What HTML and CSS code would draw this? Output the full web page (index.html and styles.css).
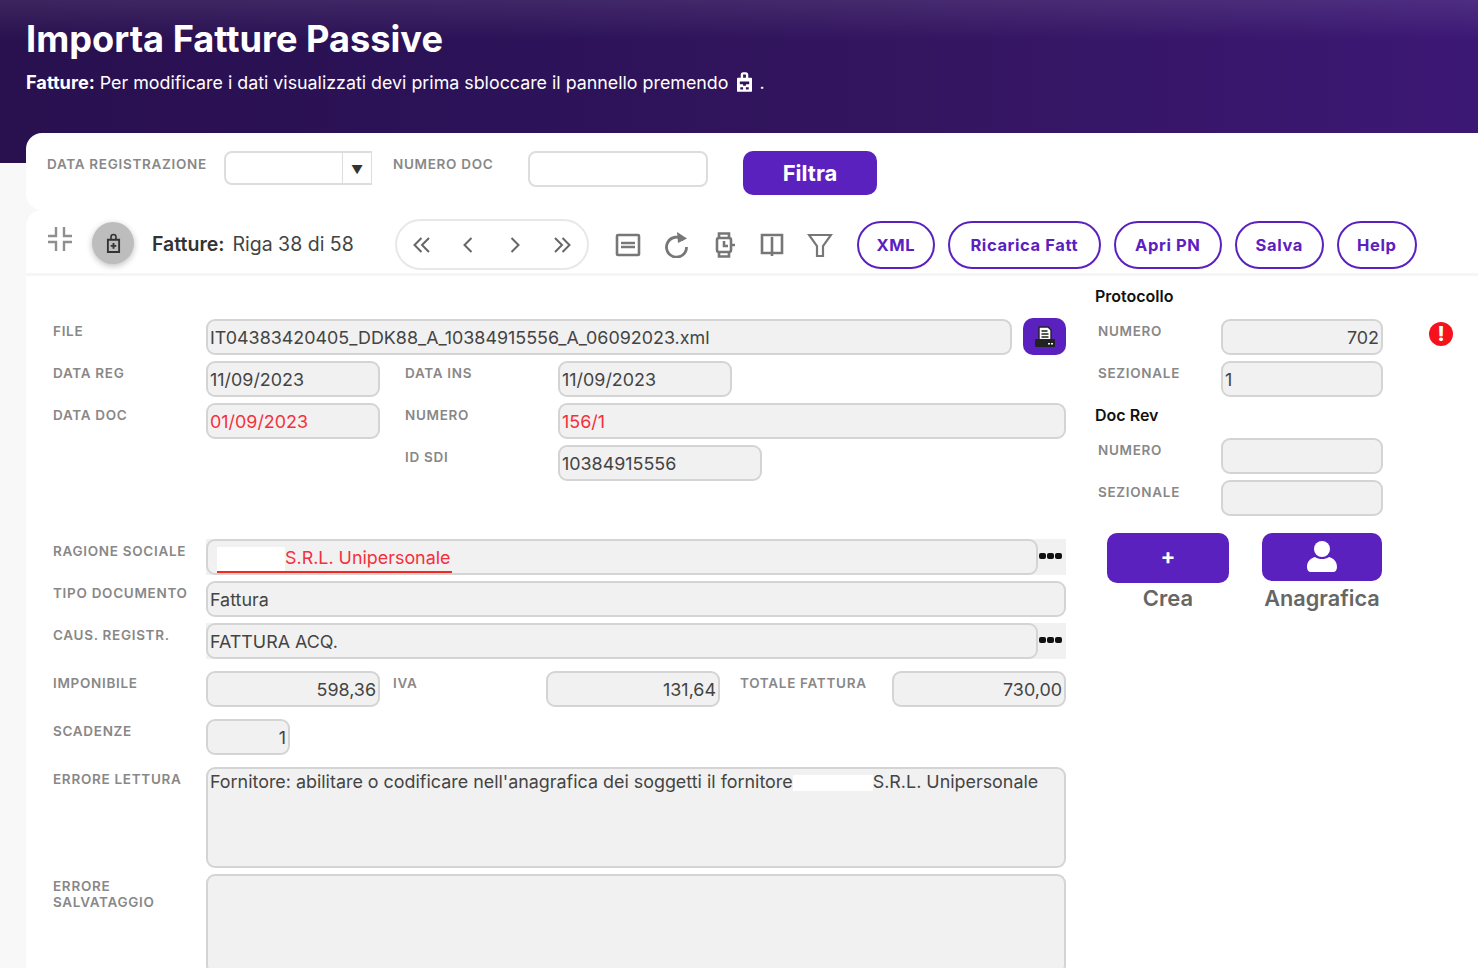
FILE: index.html
```html
<!DOCTYPE html>
<html lang="it">
<head>
  <meta charset="UTF-8">
  <title>Importa Fatture Passive</title>
  <link rel="stylesheet" href="styles.css">
</head>
<body>
  <header class="hero">
    <h1 class="hero-title">Importa Fatture Passive</h1>
    <p class="hero-text"><b>Fatture:</b> Per modificare i dati visualizzati devi prima sbloccare il pannello premendo
      <svg class="hero-lock" viewBox="0 0 16 21"><path fill="#fff" fill-rule="evenodd" d="M4 6V2.500C4 1 5 0 6.500 0h3C11 0 12 1 12 2.500V6h3a1 1 0 0 1 1 1v13a1 1 0 0 1-1 1H1a1 1 0 0 1-1-1V7a1 1 0 0 1 1-1zm2.500 0h3V2.500h-3zM3 10v3h3.500v1.500h3V13H13v-3zM3.500 16v2.500h3V16zm6 0v2.500h3V16z"/></svg> .</p>
  </header>

  <main class="card">
    <section class="filter">
      <span class="label filter-label1">DATA REGISTRAZIONE</span>
      <div class="select"><span class="select-arrow">▼</span></div>
      <span class="label filter-label2">NUMERO DOC</span>
      <div class="filter-input"></div>
      <button class="filter-btn">Filtra</button>
    </section>

    <section class="toolbar">
      <svg class="collapse" viewBox="0 0 26 26" fill="none" stroke="#8f8f8f" stroke-width="2.400"><path d="M9 1v9H1M17 1v9h8M9 25v-9H1M17 25v-9h8"/></svg>
      <span class="lock-btn"><svg viewBox="0 0 16 22" width="15" height="21"><path fill="#333" fill-rule="evenodd" d="M4.500 6V4a3.500 3.500 0 0 1 7 0v2H15v15H1V6zm1.700 0h3.600V4a1.800 1.800 0 0 0-3.600 0zM3 8v11h10V8zm4 2.500v2H5v2h2v2h2v-2h2v-2H9v-2z"/></svg></span>
      <span class="record"><b>Fatture:</b>Riga 38 di 58</span>
      <nav class="pager">
        <svg viewBox="0 0 20 20" fill="none" stroke="#666" stroke-width="2"><path d="M9.500 3 2.500 10l7 7M17 3l-7 7 7 7"/></svg>
        <svg viewBox="0 0 20 20" fill="none" stroke="#666" stroke-width="2"><path d="M13.500 3l-7 7 7 7"/></svg>
        <svg viewBox="0 0 20 20" fill="none" stroke="#666" stroke-width="2"><path d="M6.500 3l7 7-7 7"/></svg>
        <svg viewBox="0 0 20 20" fill="none" stroke="#666" stroke-width="2"><path d="M3 3l7 7-7 7M10.500 3l7 7-7 7"/></svg>
      </nav>
      <div class="tools">
        <svg viewBox="0 0 26 26" fill="none" stroke="#777" stroke-width="2.600"><rect x="2" y="3" width="22" height="20" rx="1"/><path d="M6 11h14M6 15h14"/></svg>
        <svg viewBox="0 0 26 26" fill="none" stroke="#777" stroke-width="2.800"><path d="M20.500 8A10 10 0 1 0 23.500 15"/><path fill="#777" stroke="none" d="M14 0l10 6.500-9 4.500z"/></svg>
        <svg viewBox="0 0 26 26" fill="none" stroke="#777" stroke-width="2.600"><rect x="6" y="6" width="14" height="14" rx="2"/><path d="M8 6V1.500h10V6M8 20v4.500h10V20M21 13h3M13 9v5h4"/></svg>
        <svg viewBox="0 0 26 26" fill="none" stroke="#777" stroke-width="2.600"><path d="M13 5v19M3 3h20v18H3z"/></svg>
        <svg viewBox="0 0 26 26" fill="none" stroke="#777" stroke-width="2.200"><path d="M2 3h22l-8 11v10h-6V14z"/></svg>
      </div>
      <div class="actions">
        <button class="pill pill-xml">XML</button>
        <button class="pill pill-ricarica">Ricarica Fatt</button>
        <button class="pill pill-apri">Apri PN</button>
        <button class="pill pill-salva">Salva</button>
        <button class="pill pill-help">Help</button>
      </div>
    </section>

    <section class="form">
      <div class="form-left">
        <div class="row">
          <span class="label">FILE</span>
          <div class="inp grow">IT04383420405_DDK88_A_10384915556_A_06092023.xml</div>
          <button class="print-btn"><svg viewBox="0 0 24 24" width="24" height="24"><path fill="#fff" stroke="#222" stroke-width="1.400" d="M6 2h9l3 3v10H6z"/><path stroke="#222" stroke-width="1.400" d="M8.500 6h6M8.500 9h7M8.500 12h7"/><path fill="#222" d="M3 14h18a1 1 0 0 1 1 1v6a1 1 0 0 1-1 1H3a1 1 0 0 1-1-1v-6a1 1 0 0 1 1-1z"/><path fill="#fff" d="M15 18h2v1.500h-2zM18 18h2v1.500h-2z"/></svg></button>
        </div>
        <div class="row">
          <span class="label">DATA REG</span>
          <div class="inp w-date">11/09/2023</div>
          <span class="label label-2">DATA INS</span>
          <div class="inp w-date">11/09/2023</div>
        </div>
        <div class="row">
          <span class="label">DATA DOC</span>
          <div class="inp w-date red">01/09/2023</div>
          <span class="label label-2">NUMERO</span>
          <div class="inp grow red">156/1</div>
        </div>
        <div class="row row-gap">
          <span class="spacer"></span>
          <span class="label label-2">ID SDI</span>
          <div class="inp w-sdi">10384915556</div>
        </div>
        <div class="row">
          <span class="label">RAGIONE SOCIALE</span>
          <div class="lookup grow">
            <div class="inp grow red ragione"><span class="redact redact-a"></span>S.R.L. Unipersonale<span class="underline"></span></div>
            <span class="dots"><i></i><i></i><i></i></span>
          </div>
        </div>
        <div class="row">
          <span class="label">TIPO DOCUMENTO</span>
          <div class="inp grow">Fattura</div>
        </div>
        <div class="row row-totals">
          <span class="label">CAUS. REGISTR.</span>
          <div class="lookup grow">
            <div class="inp grow">FATTURA ACQ.</div>
            <span class="dots"><i></i><i></i><i></i></span>
          </div>
        </div>
        <div class="row row-totals">
          <span class="label">IMPONIBILE</span>
          <div class="inp w-date right">598,36</div>
          <span class="label label-iva">IVA</span>
          <div class="inp w-date right">131,64</div>
          <span class="label label-tot">TOTALE FATTURA</span>
          <div class="inp grow right">730,00</div>
        </div>
        <div class="row row-totals">
          <span class="label">SCADENZE</span>
          <div class="inp w-scad right">1</div>
        </div>
        <div class="row row-text">
          <span class="label">ERRORE LETTURA</span>
          <div class="inp grow area">Fornitore: abilitare o codificare nell'anagrafica dei soggetti il fornitore <span class="redact redact-b"></span> S.R.L. Unipersonale</div>
        </div>
        <div class="row">
          <span class="label">ERRORE SALVATAGGIO</span>
          <div class="inp grow area area-big"></div>
        </div>
      </div>

      <aside class="form-right">
        <h3 class="side-title">Protocollo</h3>
        <div class="row side-row">
          <span class="label side-label">NUMERO</span>
          <div class="inp w-side right">702</div>
          <span class="alert">!</span>
        </div>
        <div class="row side-row">
          <span class="label side-label">SEZIONALE</span>
          <div class="inp w-side">1</div>
        </div>
        <h3 class="side-title side-title-2">Doc Rev</h3>
        <div class="row side-row">
          <span class="label side-label">NUMERO</span>
          <div class="inp w-side"></div>
        </div>
        <div class="row side-row">
          <span class="label side-label">SEZIONALE</span>
          <div class="inp w-side"></div>
        </div>
        <div class="side-actions">
          <div class="side-action">
            <button class="big-btn crea">+</button>
            <span>Crea</span>
          </div>
          <div class="side-action anag">
            <button class="big-btn"><svg viewBox="0 0 30 32" width="30" height="32"><circle cx="15" cy="8" r="8" fill="#fff"/><path fill="#fff" d="M0 26c0-6 4-9 8-10 2 1.500 4.500 2 7 2s5-.5 7-2c4 1 8 4 8 10 0 3-1.500 5-4 5H4c-2.500 0-4-2-4-5z"/></svg></button>
            <span>Anagrafica</span>
          </div>
        </div>
      </aside>
    </section>
  </main>
</body>
</html>
```

FILE: styles.css
```css
* {
  box-sizing: border-box;
}

html,
body {
  height: 968px;
  overflow: hidden;
}

body {
  margin: 0;
  background: #f8f8f8;
  font-family: Inter, "Liberation Sans", sans-serif;
  color: #333;
}

button {
  font-family: inherit;
  cursor: pointer;
}

/* header */
.hero {
  height: 163px;
  padding: 19px 26px 0;
  color: #fff;
  background: linear-gradient(180deg, rgba(255, 255, 255, 0.09) 0%, rgba(255, 255, 255, 0) 40px),
    linear-gradient(90deg, #29104f 0%, #2c1258 35%, #33155f 60%, #3c1875 100%);
}

.hero-title {
  margin: 0;
  font-size: 36.200px;
  line-height: 40px;
  font-weight: 700;
}

.hero-text {
  margin: 12px 0 0;
  font-size: 17.830px;
  line-height: 22px;
}

.hero-text b {
  font-size: 18.200px;
}

.hero-lock {
  width: 15px;
  height: 20px;
  margin: 0 2px 0 4px;
  vertical-align: -3px;
}

/* card */
.card {
  margin: -30px 0 0 26px;
  position: relative;
}

.label {
  flex: none;
  font-size: 13.500px;
  line-height: 16px;
  font-weight: 600;
  letter-spacing: 0.7px;
  color: #888;
}

.filter {
  display: flex;
  align-items: flex-start;
  height: 77px;
  padding: 18px 0 0 21px;
  background: #fff;
  border-radius: 16px 0 0 16px;
}

.filter-label1 {
  width: 177px;
  margin-top: 5px;
}

.select {
  position: relative;
  width: 148px;
  height: 34px;
  border: 2px solid #ddd;
  border-right-width: 1px;
  border-radius: 8px 0 0 8px;
}

.select-arrow {
  position: absolute;
  top: 0;
  right: 0;
  width: 29px;
  height: 31px;
  border-left: 1px solid #ddd;
  font-size: 12px;
  line-height: 33px;
  text-align: center;
  color: #333;
}

.filter-label2 {
  width: 135px;
  margin: 5px 0 0 21px;
}

.filter-input {
  width: 180px;
  height: 36px;
  border: 2px solid #ddd;
  border-radius: 8px;
}

.filter-btn {
  width: 134px;
  height: 44px;
  margin-left: 35px;
  border: 0;
  border-radius: 10px;
  background: #5b21bf;
  color: #fff;
  font-size: 22px;
  font-weight: 700;
}

/* toolbar */
.toolbar {
  display: flex;
  align-items: center;
  height: 66px;
  padding: 7px 0 0 21px;
  background: #fff;
  border-radius: 16px 0 0 0;
  border-bottom: 3px solid #f6f6f6;
}

.collapse {
  width: 26px;
  height: 26px;
  margin-top: -13px;
}

.lock-btn {
  display: flex;
  align-items: center;
  justify-content: center;
  width: 42px;
  height: 42px;
  margin: -4px 0 0 19px;
  border-radius: 50%;
  background: #bdbdbd;
  box-shadow: 0 2px 6px rgba(0, 0, 0, 0.25);
}

.record {
  margin: -2px 0 0 18px;
  font-size: 19.500px;
  color: #444;
}

.record b {
  margin-right: 8px;
  font-weight: 600;
  color: #333;
}

.pager {
  display: flex;
  align-items: center;
  justify-content: space-between;
  width: 194px;
  height: 51px;
  margin: -1px 0 0 41px;
  padding: 0 15px;
  border: 2px solid #e8e8e8;
  border-radius: 26px;
}

.pager svg {
  width: 20px;
  height: 20px;
}

.tools {
  display: flex;
  gap: 22px;
  margin-left: 26px;
}

.tools svg {
  width: 26px;
  height: 26px;
}

.actions {
  display: flex;
  gap: 13px;
  margin-left: 24px;
}

.pill {
  height: 48px;
  padding: 0;
  border: 2px solid #5b21bf;
  border-radius: 24px;
  background: #fff;
  color: #5b21bf;
  font-size: 16.500px;
  font-weight: 700;
  letter-spacing: 0.6px;
}

.pill-xml {
  width: 78px;
}

.pill-ricarica {
  width: 153px;
}

.pill-apri {
  width: 108px;
}

.pill-salva {
  width: 89px;
}

.pill-help {
  width: 80px;
}

/* form */
.form {
  display: flex;
  gap: 29px;
  height: 695px;
  overflow: hidden;
  padding: 11px 0 0 27px;
  background: #fff;
}

.form-left {
  width: 1013px;
  margin-top: 32px;
}

.row {
  display: flex;
  align-items: flex-start;
  margin-bottom: 6px;
}

.row > .label:first-child,
.spacer {
  flex: none;
  width: 153px;
  margin-top: 4px;
}

.row-gap {
  margin-bottom: 58px;
}

.row-totals {
  margin-bottom: 12px;
}

.inp {
  flex: none;
  height: 36px;
  padding: 0 2px;
  border: 2px solid #d4d4d4;
  border-radius: 9px;
  background: #f1f1f1;
  font-size: 17.900px;
  line-height: 33px;
  color: #444;
  white-space: nowrap;
}

.grow {
  flex: 1;
  min-width: 0;
}

.right {
  text-align: right;
}

.red {
  color: #f4303c;
}

.w-date {
  width: 174px;
}

.w-sdi {
  width: 204px;
}

.w-scad {
  width: 84px;
}

.w-side {
  width: 162px;
}

.label-2 {
  width: 153px;
  margin: 4px 0 0 25px;
}

.spacer + .label-2 {
  margin-left: 199px;
}

.label-iva {
  width: 153px;
  margin: 4px 0 0 13px;
}

.label-tot {
  width: 152px;
  margin: 4px 0 0 20px;
}

.print-btn {
  flex: none;
  display: flex;
  align-items: center;
  justify-content: center;
  width: 43px;
  height: 37px;
  margin: -1px 0 -1px 11px;
  padding: 0;
  border: 0;
  border-radius: 10px;
  background: #5b21bf;
}

.lookup {
  display: flex;
  background: #f1f1f1;
}

.lookup .inp {
  position: relative;
}

.dots {
  flex: none;
  display: flex;
  align-items: center;
  gap: 1px;
  width: 28px;
  height: 36px;
  padding: 0 0 2px 1px;
}

.dots i {
  width: 7px;
  height: 6px;
  border-radius: 2px;
  background: #111;
}

.ragione {
  position: relative;
  padding-left: 9px;
}

.redact {
  display: inline-block;
  background: #fff;
}

.redact-a {
  width: 68px;
  height: 24px;
  vertical-align: middle;
}

.redact-b {
  width: 80px;
  height: 16px;
  margin: 0 -5px;
  vertical-align: -3px;
}

.underline {
  position: absolute;
  left: 9px;
  bottom: 0;
  width: 235px;
  height: 2px;
  background: #f02a20;
}

.area {
  height: 101px;
  white-space: normal;
  line-height: 26px;
}

.area-big {
  height: 100px;
}

/* right column */
.form-right {
  width: 340px;
}

.side-title {
  margin: 0 0 14px;
  font-size: 16px;
  line-height: 18px;
  font-weight: 600;
  color: #111;
}

.side-title-2 {
  margin: 9px 0 14px;
}

.row > .side-label.label:first-child {
  width: 126px;
  margin-left: 3px;
  margin-right: -3px;
}

.alert {
  flex: none;
  width: 24px;
  height: 24px;
  margin: 3px 0 0 46px;
  border-radius: 50%;
  background: #f5121c;
  color: #fff;
  font-size: 20px;
  font-weight: 800;
  line-height: 24px;
  text-align: center;
}

.side-actions {
  display: flex;
  margin: 17px 0 0 12px;
  gap: 33px;
}

.side-action {
  display: flex;
  flex-direction: column;
  align-items: center;
  font-size: 22px;
  font-weight: 600;
  color: #666;
}

.anag span {
  font-size: 21.700px;
}

.big-btn {
  display: flex;
  align-items: center;
  justify-content: center;
  width: 122px;
  height: 50px;
  padding: 0;
  margin-bottom: 2px;
  border: 0;
  border-radius: 10px;
  background: #5b21bf;
  color: #fff;
  font-size: 22px;
  font-weight: 700;
}

.crea {
  padding-bottom: 5px;
}

.anag .big-btn {
  width: 120px;
  height: 48px;
  margin-bottom: 4px;
}
```
